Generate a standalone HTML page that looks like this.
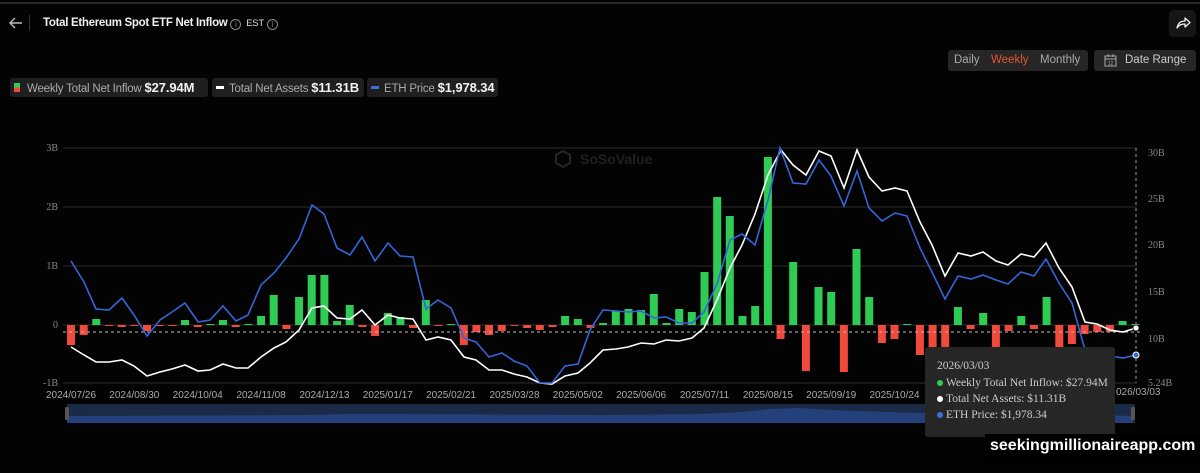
<!DOCTYPE html>
<html><head><meta charset="utf-8">
<style>
*{margin:0;padding:0;box-sizing:border-box}
body{width:1200px;height:473px;background:#030303;overflow:hidden;position:relative;font-family:"Liberation Sans",sans-serif;color:#ddd}
.abs{position:absolute}
.topline{left:0;top:2px;width:1200px;height:2px;background:#2a2a2a}
.title{left:43px;top:17px;font-size:11.5px;font-weight:bold;color:#f0f0f0;letter-spacing:-0.3px;white-space:nowrap}
.info{display:inline-block;width:11px;height:11px;border:1px solid #888;border-radius:50%;font-size:8px;line-height:9px;text-align:center;color:#888;vertical-align:-1px;font-weight:normal;letter-spacing:0}
.chip{top:78px;height:19px;background:#1f1f1f;border-radius:3px;font-size:11.5px;line-height:19px;color:#aaa;padding-left:17px;white-space:nowrap;letter-spacing:-0.2px}
.chip b{color:#f2f2f2;font-size:13px;letter-spacing:-0.1px}
.seg{top:50px;height:21px;background:#262626;border-radius:3px;font-size:11.5px;line-height:21px;color:#aaa;white-space:nowrap}
</style></head><body>
<div class="abs topline"></div>
<svg class="abs" style="left:8px;top:16px" width="16" height="14" viewBox="0 0 16 14"><path d="M14 7H2M7 2L2 7l5 5" stroke="#bbb" stroke-width="1.4" fill="none"/></svg>
<div class="abs" style="left:29px;top:15px;width:1px;height:16px;background:#333"></div>
<div class="abs title">Total Ethereum Spot ETF Net Inflow <span class="info">i</span> <span style="font-size:9.5px;font-weight:normal;color:#ddd;margin-left:2px">EST</span> <span class="info">i</span></div>
<div class="abs" style="left:1169px;top:10px;width:27px;height:27px;background:#161616;border-radius:5px"></div>
<svg class="abs" style="left:1175px;top:16px" width="16" height="14" viewBox="0 0 16 14"><path d="M2 12C3 7 6 5 10 5V2l5 4.5-5 4.5V8C6 8 4 9 2 12z" stroke="#eee" stroke-width="1.3" fill="none" stroke-linejoin="round"/></svg>
<div class="abs seg" style="left:948px;width:140px"><span style="position:absolute;left:6px">Daily</span><span style="position:absolute;left:43px;color:#e0552f">Weekly</span><span style="position:absolute;left:92px">Monthly</span></div>
<div class="abs seg" style="left:1094px;width:102px;color:#ccc"><svg style="position:absolute;left:10px;top:4px" width="13" height="13" viewBox="0 0 13 13"><rect x="1" y="2" width="11" height="10" stroke="#aaa" fill="none"/><path d="M1 5h11M4 0v3M9 0v3" stroke="#aaa"/><text x="6.5" y="11" font-size="5" fill="#aaa" text-anchor="middle">12</text></svg><span style="position:absolute;left:31px">Date Range</span></div>
<div class="abs chip" style="left:10px;width:198px"><span class="abs" style="left:4px;top:5px;width:6px;height:9px;background:linear-gradient(#2ecc55 50%,#f04a3c 50%)"></span>Weekly Total Net Inflow <b>$27.94M</b></div>
<div class="abs chip" style="left:212px;width:152px"><span class="abs" style="left:4px;top:8px;width:8px;height:3px;background:#fff"></span>Total Net Assets <b>$11.31B</b></div>
<div class="abs chip" style="left:367px;width:131px"><span class="abs" style="left:4px;top:8px;width:8px;height:3px;background:#3b6fe0"></span>ETH Price <b>$1,978.34</b></div>

<svg class="abs" style="left:0;top:0" width="1200" height="473" id="ch">
<g stroke="#2e2e2e" stroke-width="1">
<line x1="63" y1="148" x2="1137" y2="148"/><line x1="63" y1="207" x2="1137" y2="207"/><line x1="63" y1="266" x2="1137" y2="266"/><line x1="63" y1="325" x2="1137" y2="325"/><line x1="63" y1="383" x2="1137" y2="383"/>
</g>
<g font-family="Liberation Serif,serif" font-size="10" fill="#888">
<text x="58" y="151" text-anchor="end">3B</text><text x="58" y="210" text-anchor="end">2B</text><text x="58" y="269" text-anchor="end">1B</text><text x="58" y="328" text-anchor="end">0</text><text x="58" y="386" text-anchor="end">-1B</text>
<text x="1148" y="156">30B</text><text x="1148" y="202">25B</text><text x="1148" y="248">20B</text><text x="1148" y="295">15B</text><text x="1148" y="342">10B</text><text x="1148" y="386">5.24B</text>
</g>
<g opacity="0.35"><path d="M563 151l7 4v8l-7 4-7-4v-8z" fill="none" stroke="#666" stroke-width="2"/><text x="580" y="164" font-size="14" font-weight="bold" fill="#555">SoSoValue</text></g>
<g id="bars"></g>
<line x1="63" y1="332" x2="1140" y2="332" stroke="#bbb" stroke-dasharray="3,3" stroke-width="1"/>
<line x1="1136" y1="148" x2="1136" y2="383" stroke="#999" stroke-dasharray="3,3" stroke-width="1"/>
<path id="wl" fill="none" stroke="#fff" stroke-width="1.6"/>
<path id="bl" fill="none" stroke="#3466d8" stroke-width="1.6"/>
<circle cx="1136" cy="328" r="3" fill="#fff" stroke="#333"/>
<circle cx="1136" cy="355" r="3" fill="#3466d8" stroke="#fff" stroke-width="1"/>
<g id="xl" font-size="10" fill="#aaa" text-anchor="middle"></g>
<rect x="67" y="404" width="1068" height="19" fill="#1b2a46"/>
<path d="M67 416L300 415 350 414 400 414 600 415 700 414 740 412 770 409 800 408 830 410 860 411 920 413 1000 412 1133 416V423H67z" fill="#23407a"/>
<rect x="65" y="407" width="4" height="13" rx="1" fill="#555"/><rect x="1131" y="407" width="4" height="13" rx="1" fill="#555"/>
</svg>

<div class="abs" style="left:925px;top:347px;width:190px;height:90px;background:#262626;border-radius:3px;font-family:'Liberation Serif',serif;font-size:11.5px;color:#ccc;padding:11px 0 0 12px;line-height:16px;white-space:nowrap">
<div style="margin-bottom:1px">2026/03/03</div>
<div><span style="display:inline-block;width:6px;height:6px;border-radius:50%;background:#2ecc55;margin-right:3px"></span>Weekly Total Net Inflow: $27.94M</div>
<div><span style="display:inline-block;width:6px;height:6px;border-radius:50%;background:#fff;margin-right:3px"></span>Total Net Assets: $11.31B</div>
<div><span style="display:inline-block;width:6px;height:6px;border-radius:50%;background:#3b6fe0;margin-right:3px"></span>ETH Price: $1,978.34</div>
</div>
<div class="abs" style="left:1116px;top:387px;font-size:10px;color:#aaa">026/03/03</div>
<div class="abs" style="left:985px;top:434px;width:215px;height:30px;background:#000"></div>
<div class="abs" style="left:990px;top:437px;font-size:16px;font-weight:bold;color:#fff">seekingmillionaireapp.com</div>

<script>
var h=[-20,-10,6,-1,-2,-1,-6,-1,-1,5,-2,0,5,-2,1,9,30,-4,28,50,50,4,20,-2,-11,12,8,-3,25,-1,0,-20,-7,-10,-6,-0.5,-3,-5,-2,9,6,-3,2,14,16,15,31,2,16,13,53,128,109,9,19,168,-14,63,-46,38,33,-47,76,28,-18,-14,1,-30,-22,-25,18,-4,12,-22,-6,9,-4,28,-22,-19,-9,-7,-7,4,1];
var s='',st=12.67;
h.forEach(function(v,i){var x=71+i*st-4;var hh=Math.max(Math.abs(v),1);
s+='<rect x="'+x.toFixed(1)+'" y="'+(v>=0?325-hh:325)+'" width="8" height="'+hh+'" fill="'+(v>=0?'#2ecc55':'#f04a3c')+'"/>';});
document.getElementById('bars').innerHTML=s;
var b=[[71,261],[84,282],[96,309],[109,310],[122,298],[134,315],[147,336],[160,320],[172,312],[185,303],[198,322],[210,320],[223,306],[236,321],[248,315],[261,285],[274,273],[286,258],[299,239],[312,205],[324,214],[337,248],[350,255],[362,237],[375,261],[388,243],[400,256],[413,257],[426,309],[438,300],[451,308],[464,338],[476,342],[489,357],[502,353],[514,361],[527,366],[540,383],[552,383],[565,366],[578,364],[590,330],[603,310],[616,311],[628,312],[641,311],[654,318],[666,317],[679,323],[692,323],[704,312],[717,284],[730,240],[742,234],[755,245],[768,200],[780,148],[793,183],[806,184],[819,160],[831,176],[844,206],[857,171],[869,208],[882,221],[895,213],[907,216],[920,248],[932,272],[945,299],[958,276],[971,279],[983,275],[996,280],[1008,284],[1021,272],[1034,276],[1046,259],[1059,283],[1072,303],[1085,350],[1097,357],[1110,356],[1123,358],[1136,355]];
var w=[[71,347],[84,355],[96,362],[109,362],[122,360],[134,366],[147,376],[160,372],[172,369],[185,365],[198,371],[210,370],[223,364],[236,368],[248,368],[261,357],[274,348],[286,342],[299,330],[312,308],[324,306],[337,318],[350,319],[362,310],[375,325],[388,315],[400,318],[413,319],[426,340],[438,337],[451,340],[464,357],[476,360],[489,370],[502,370],[514,374],[527,377],[540,383],[552,384],[565,376],[578,373],[590,363],[603,350],[616,349],[628,347],[641,343],[654,344],[666,340],[679,341],[692,338],[704,328],[717,300],[730,268],[742,245],[755,214],[768,175],[781,150],[793,165],[806,175],[819,151],[831,156],[844,188],[857,150],[869,177],[882,191],[895,188],[907,191],[920,222],[932,245],[945,276],[958,253],[971,256],[983,252],[996,261],[1008,265],[1021,254],[1034,257],[1046,243],[1059,268],[1072,287],[1085,322],[1097,324],[1110,330],[1123,332],[1136,328]];
function p(a){return 'M'+a.map(function(q){return q[0]+' '+q[1]}).join('L')}
document.getElementById('bl').setAttribute('d',p(b));
document.getElementById('wl').setAttribute('d',p(w));
var L=['2024/07/26','2024/08/30','2024/10/04','2024/11/08','2024/12/13','2025/01/17','2025/02/21','2025/03/28','2025/05/02','2025/06/06','2025/07/11','2025/08/15','2025/09/19','2025/10/24'];
var t='';L.forEach(function(l,i){t+='<text x="'+(71+i*5*st).toFixed(1)+'" y="398">'+l+'</text>'});
document.getElementById('xl').innerHTML=t;
</script>
</body></html>
